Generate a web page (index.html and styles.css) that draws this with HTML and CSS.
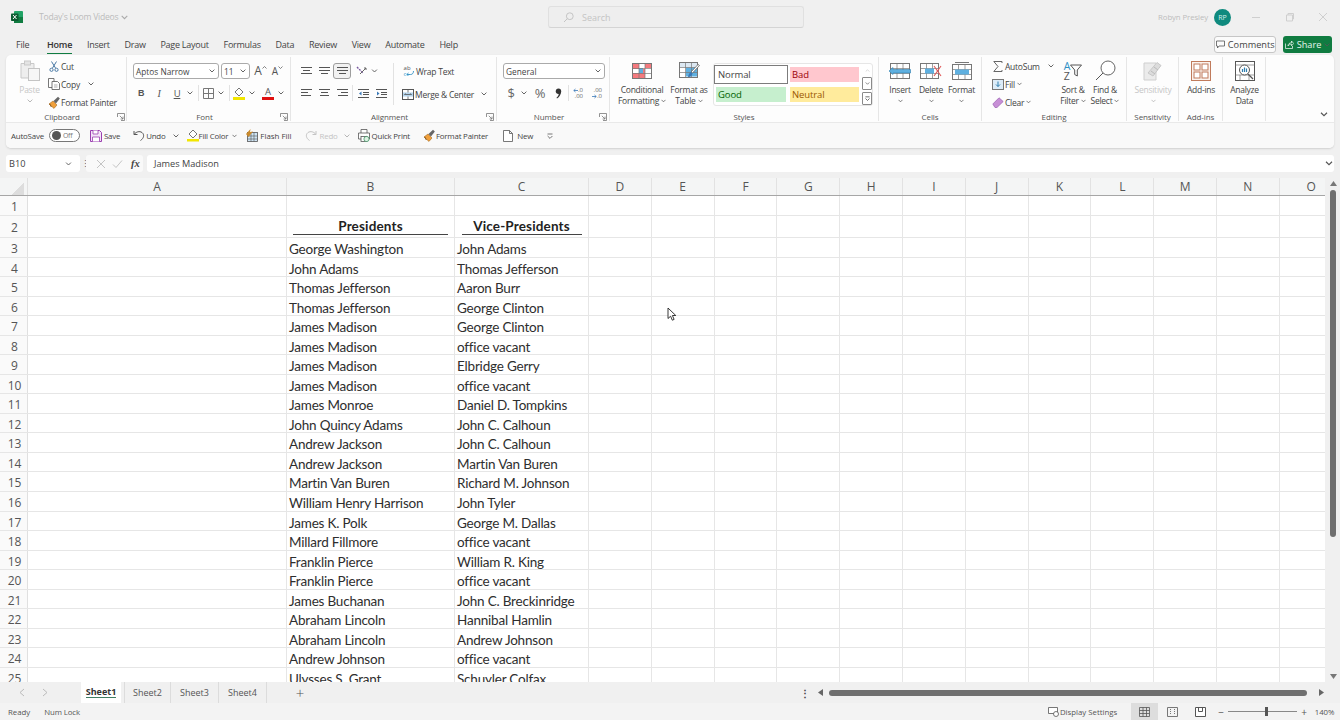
FILE: index.html
```html
<!DOCTYPE html>
<html lang="en">
<head>
<meta charset="utf-8">
<title>Today's Loom Videos - Excel</title>
<link rel="stylesheet" href="styles.css">
</head>
<body>
<svg class="sprite" width="0" height="0">
  <symbol id="chev" viewBox="0 0 6 4"><path d="M.6.6 3 3 5.4.6" fill="none" stroke="#555" stroke-width=".9"/></symbol>
  <symbol id="launch" viewBox="0 0 8 8"><path d="M.5 4V.5H7.5V7.5H4M2.8 2.8 6 6M6 3.6V6H3.6" fill="none" stroke="#777" stroke-width=".8"/></symbol>
  <symbol id="brush" viewBox="0 0 13 13"><path d="M1 8 5 5l4 4-3 3.400z" fill="#f0a03c" stroke="#a66a1f" stroke-width=".6"/><path d="M5.500 5 10 .8l1.800 1.800L8 7.500z" fill="#666"/><path d="M1 8l2 1-1 1 2 .5" fill="none" stroke="#7b4d16" stroke-width=".6"/></symbol>
</svg>

<header class="titlebar">
  <div class="title-left">
    <svg class="xl" width="12" height="12" viewBox="0 0 12 12"><rect x="3" width="9" height="12" rx="1" fill="#21a366"/><rect x="3" y="6" width="9" height="6" fill="#107c41"/><rect y="2.500" width="7.500" height="7.500" rx=".8" fill="#0b5c31"/><path d="M2 4l3.500 4M5.500 4 2 8" stroke="#fff" stroke-width="1"/></svg>
    <span class="doc">Today's Loom Videos</span>
    <svg class="chev faint" width="7" height="5"><use href="#chev"/></svg>
  </div>
  <div class="search">
    <svg width="11" height="11" viewBox="0 0 11 11"><circle cx="6.800" cy="4.200" r="3.400" fill="none" stroke="#c4c4c4"/><path d="M4.300 6.700 1 10" stroke="#c4c4c4"/></svg>
    <span>Search</span>
  </div>
  <div class="title-right">
    <span class="user">Robyn Presley</span>
    <span class="avatar">RP</span>
    <svg class="win win-min" width="10" height="10"><path d="M1 5.500h8" stroke="#cfcfcf"/></svg>
    <svg class="win win-max" width="10" height="10"><path d="M1.500 3h6v6h-6zM3 3V1.500h5.500V7H7.500" fill="none" stroke="#cfcfcf"/></svg>
    <svg class="win win-close" width="10" height="10"><path d="M1 1l8 8M9 1l-8 8" stroke="#cfcfcf"/></svg>
  </div>
</header>

<nav class="tabs">
  <span class="tab t-file">File</span>
  <span class="tab active">Home</span>
  <span class="tab">Insert</span>
  <span class="tab">Draw</span>
  <span class="tab">Page Layout</span>
  <span class="tab">Formulas</span>
  <span class="tab">Data</span>
  <span class="tab">Review</span>
  <span class="tab">View</span>
  <span class="tab">Automate</span>
  <span class="tab">Help</span>
  <button class="btn-comments">
    <svg width="9" height="9" viewBox="0 0 9 9"><path d="M.5 1h8v5H3L1.500 8V6h-1z" fill="none" stroke="#555" stroke-width=".8"/></svg>Comments
  </button>
  <button class="btn-share">
    <svg width="9" height="9" viewBox="0 0 9 9"><path d="M.5 3.500v5h7V6M3 6c0-2 1.500-3.200 3.500-3.200V1L8.700 3.500 6.500 5.800V4.200C5 4.200 3.800 4.800 3 6z" fill="none" stroke="#fff" stroke-width=".7"/></svg>Share
    <svg width="6" height="4"><use href="#chev" class="white"/></svg>
  </button>
</nav>

<section class="card">
  <div class="ribbon">

    <div class="group g-clip">
      <div class="gbody">
        <div class="big big-paste disabled">
          <span class="bigicon">
            <svg width="20" height="21" viewBox="0 0 20 21"><path d="M1 3.500h13V18H1z" fill="#eee" stroke="#c9c9c9"/><rect x="4.500" y="1" width="6" height="4" fill="#e4e4e4" stroke="#c9c9c9"/><rect x="8.500" y="8.500" width="11" height="12" fill="#f6f6f6" stroke="#c4c4c4"/></svg>
          </span>
          <span>Paste</span>
          <svg class="chev faint" width="6" height="4"><use href="#chev"/></svg>
        </div>
        <div class="stack s-clip">
          <div class="sm"><span class="smi">
            <svg width="10" height="11" viewBox="0 0 10 11"><path d="M2.500.5 6.500 7M7.500.5l-4 6.500" stroke="#4b7aa5" fill="none"/><circle cx="2.500" cy="8.800" r="1.600" fill="none" stroke="#4b7aa5"/><circle cx="7.500" cy="8.800" r="1.600" fill="none" stroke="#4b7aa5"/></svg>
          </span>Cut</div>
          <div class="sm"><span class="smi">
            <svg width="12" height="12" viewBox="0 0 12 12"><path d="M.5.500h5.500v9H.5z" fill="#fff" stroke="#555" stroke-width=".8"/><path d="M4 3.500h5.500l2 2v6H4z" fill="#fff" stroke="#555" stroke-width=".8"/><path d="M6 7h3.500M6 9h3.500" stroke="#777" stroke-width=".6"/></svg>
          </span>Copy<svg class="chev c-copy" width="6" height="4"><use href="#chev"/></svg></div>
          <div class="sm"><span class="smi"><svg width="13" height="13"><use href="#brush"/></svg></span>Format Painter</div>
        </div>
      </div>
      <div class="glabel">Clipboard<svg class="launch" width="8" height="8"><use href="#launch"/></svg></div>
    </div>

    <div class="group g-font">
      <div class="gbody col">
        <div class="r r1">
          <div class="select s-fontname"><span>Aptos Narrow</span><svg width="6" height="4"><use href="#chev"/></svg></div>
          <div class="select s-fontsize"><span>11</span><svg width="6" height="4"><use href="#chev"/></svg></div>
          <span class="ic w17 gl-a">A<svg class="caret" width="5" height="3" viewBox="0 0 5 3"><path d="M.5 2.500 2.500.5l2 2" fill="none" stroke="#666" stroke-width=".8"/></svg></span>
          <span class="ic w17 gl-a small">A<svg class="caret" width="5" height="3" viewBox="0 0 5 3"><path d="M.5.500l2 2 2-2" fill="none" stroke="#666" stroke-width=".8"/></svg></span>
        </div>
        <div class="r r2">
          <span class="ic w16 gl-b">B</span>
          <span class="ic w16 m2 gl-i">I</span>
          <span class="ic w16 m2 gl-u">U</span>
          <svg class="cv" width="10" height="4"><use href="#chev"/></svg>
          <i class="vsep m3"></i>
          <span class="ic w16 m1"><svg width="11" height="11" viewBox="0 0 11 11"><path d="M.5.500h10v10H.5zM5.500.5v10M.5 5.500h10" fill="none" stroke="#777"/></svg></span>
          <svg class="cv" width="10" height="4"><use href="#chev"/></svg>
          <i class="vsep m3"></i>
          <span class="ic w16 m1"><svg width="12" height="13" viewBox="0 0 12 13"><path d="M6 1 10 5 6 9 2 5z" fill="#fff" stroke="#666" stroke-width=".9"/><rect y="10" width="12" height="3" fill="#f2e600"/></svg></span>
          <svg class="cv" width="10" height="4"><use href="#chev"/></svg>
          <span class="ic w16 m3 col-a"><span class="col-a-t">A</span><i class="bar-red"></i></span>
          <svg class="cv" width="10" height="4"><use href="#chev"/></svg>
        </div>
      </div>
      <div class="glabel">Font<svg class="launch" width="8" height="8"><use href="#launch"/></svg></div>
    </div>

    <div class="group g-align">
      <div class="gbody">
        <div class="col a-left">
          <div class="r r1">
            <span class="ic w18"><svg width="11" height="12"><path d="M0 2.500h11M2 5.500h7M0 8.500h11" stroke="#555"/></svg></span>
            <span class="ic w18"><svg width="11" height="8"><path d="M0 .5h11M0 3.500h11M2 6.500h7" stroke="#555"/></svg></span>
            <span class="ic w18 on"><svg width="11" height="8"><path d="M0 .5h11M0 3.500h11M2 6.500h7" stroke="#555"/></svg></span>
            <span class="ic w18 m2"><svg width="12" height="10" viewBox="0 0 12 10"><path d="M1 1l6 6" stroke="#7a5aa0" stroke-width="1.400" stroke-dasharray="2 1"/><path d="M4 8 10 2M8 2h2v2" stroke="#666" fill="none"/></svg></span>
            <svg class="cv w7" width="7" height="4"><use href="#chev"/></svg>
          </div>
          <div class="r r2">
            <span class="ic w18"><svg width="11" height="8"><path d="M0 .5h11M0 3.500h7M0 6.500h10" stroke="#555"/></svg></span>
            <span class="ic w18"><svg width="11" height="8"><path d="M0 .5h11M2 3.500h7M1 6.500h9" stroke="#555"/></svg></span>
            <span class="ic w18"><svg width="11" height="8"><path d="M0 .5h11M4 3.500h7M1 6.500h10" stroke="#555"/></svg></span>
            <i class="vsep m1"></i>
            <span class="ic w18 m1"><svg width="11" height="9"><path d="M0 .5h11M5 3.500h6M5 5.500h6M0 8.500h11" stroke="#555"/><path d="M3.500 2.500 1 4.500l2.500 2z" fill="#3b79b8"/></svg></span>
            <span class="ic w18"><svg width="11" height="9"><path d="M0 .5h11M5 3.500h6M5 5.500h6M0 8.500h11" stroke="#555"/><path d="M1 2.500l2.500 2-2.500 2z" fill="#3b79b8"/></svg></span>
          </div>
        </div>
        <i class="vsep tall"></i>
        <div class="col a-right">
          <div class="sm sm-wrap"><span class="smi w14"><span class="wi"><span class="wi-ab">ab</span><span class="wi-c">c<svg width="8" height="5" viewBox="0 0 8 5"><path d="M7.500 0c0 2-1 3.500-3 3.500H.8M2.500 2 .8 3.500l1.700 1.300" fill="none" stroke="#2f8fc4" stroke-width=".9"/></svg></span></span></span>Wrap Text</div>
          <div class="sm sm-merge"><span class="smi w14"><svg width="12" height="11" viewBox="0 0 12 11"><rect x=".5" y=".5" width="11" height="10" fill="#fff" stroke="#555"/><rect x="1" y="3.500" width="10" height="4" fill="#b4d4ec"/><path d="M6 .5v3M6 7.500v3M2.500 5.500h7M2.500 5.500l1-1M9.500 5.500l-1-1" stroke="#555" stroke-width=".8" fill="none"/></svg></span>Merge &amp; Center<svg class="chev c-merge" width="6" height="4"><use href="#chev"/></svg></div>
        </div>
      </div>
      <div class="glabel">Alignment<svg class="launch" width="8" height="8"><use href="#launch"/></svg></div>
    </div>

    <div class="group g-num">
      <div class="gbody col">
        <div class="r r1"><div class="select s-general"><span>General</span><svg width="6" height="4"><use href="#chev"/></svg></div></div>
        <div class="r r2">
          <span class="ic w16 gl-big">$</span>
          <svg class="cv" width="10" height="4"><use href="#chev"/></svg>
          <span class="ic w16 m3 gl-big">%</span>
          <span class="ic w16 m2"><svg width="7" height="11" viewBox="0 0 7 11"><circle cx="3.500" cy="3.200" r="2.700" fill="#333"/><path d="M6 3.500C6 6.500 4.500 9 2 10.500L1.500 9.800C3 8.500 3.800 7 3.800 5.500z" fill="#333"/></svg></span>
          <i class="vsep m2"></i>
          <span class="ic w16 m1"><span class="deci"><span class="d-top"><svg width="5" height="5" viewBox="0 0 5 5"><path d="M5 2.500H.8M2.500 1 .8 2.500 2.500 4" fill="none" stroke="#3b79b8" stroke-width=".8"/></svg>.0</span><span class="d-bot">.00</span></span></span>
          <span class="ic w16 m3"><span class="deci"><span class="d-bot">.00</span><span class="d-top"><svg width="5" height="5" viewBox="0 0 5 5"><path d="M0 2.500h4.200M2.500 1l1.700 1.500L2.500 4" fill="none" stroke="#3b79b8" stroke-width=".8"/></svg>.0</span></span></span>
        </div>
      </div>
      <div class="glabel">Number<svg class="launch" width="8" height="8"><use href="#launch"/></svg></div>
    </div>

    <div class="group g-styles">
      <div class="gbody">
        <div class="big w48">
          <span class="bigicon"><svg width="20" height="16" viewBox="0 0 20 16"><rect x=".5" y=".5" width="19" height="15" fill="#fff" stroke="#777"/><path d="M1 1h6v5H1zM7 6h6v4H7zM1 10h12v5H1zM13 1h6v4h-6z" fill="#f47a7e"/><path d="M7 5h4v5H7z" fill="#5fb0e0"/><path d="M7 .5v15M13 .5v15M.5 5.500h19M.5 10.500h19" stroke="#777" stroke-width=".7"/></svg></span>
          <span>Conditional</span>
          <span>Formatting <svg width="5" height="4"><use href="#chev"/></svg></span>
        </div>
        <div class="big w46">
          <span class="bigicon"><svg width="21" height="17" viewBox="0 0 21 17"><rect x=".5" y=".5" width="18" height="15" fill="#fff" stroke="#777"/><path d="M7 5.500h11v9H7z" fill="#5fb0e0"/><path d="M1 1h17v4H1z" fill="#dce8f2"/><path d="M6.500.5v15M12.500.5v15M.5 5.500h18M.5 10.500h18" stroke="#777" stroke-width=".7"/><path d="M20.500 3.500 13.500 11l-1.500-1 7-7.500z" fill="#fff" stroke="#555" stroke-width=".7"/><path d="M9 15c.5-3 2-5 3-5l1.500 1.200C13.500 13 11.500 15.500 9 15z" fill="#3b79b8"/></svg></span>
          <span>Format as</span>
          <span>Table <svg width="5" height="4"><use href="#chev"/></svg></span>
        </div>
        <div class="gallery">
          <div class="cells">
            <span class="st st-normal">Normal</span>
            <span class="st st-bad">Bad</span>
            <span class="st st-good">Good</span>
            <span class="st st-neutral">Neutral</span>
          </div>
          <div class="gscroll">
            <span class="gs gs-up"><svg width="5" height="3" viewBox="0 0 6 4"><path d="M.6 3.400 3 1l2.400 2.400" fill="none" stroke="#ccc"/></svg></span>
            <span class="gs gs-down"><svg width="5" height="3"><use href="#chev"/></svg></span>
            <span class="gs gs-more"><svg width="5" height="5" viewBox="0 0 6 6"><path d="M.5 1h5M.6 3 3 5.400 5.400 3" fill="none" stroke="#555"/></svg></span>
          </div>
        </div>
      </div>
      <div class="glabel">Styles</div>
    </div>

    <div class="group g-cells">
      <div class="gbody">
        <div class="big w30">
          <span class="bigicon"><svg width="22" height="16" viewBox="0 0 22 16"><rect x="1.500" y=".5" width="19" height="15" fill="#fff" stroke="#777"/><path d="M8 .5v15M14 .5v15M1.500 5.500h19M1.500 10.500h19" stroke="#777" stroke-width=".7"/><path d="M0 8 4 4.500V6.500H21.500V10H4v1.500z" fill="#5fb0e0" stroke="#2f7fb0" stroke-width=".6"/></svg></span>
          <span>Insert</span>
          <svg class="chev" width="5" height="4"><use href="#chev"/></svg>
        </div>
        <div class="big w32">
          <span class="bigicon"><svg width="22" height="16" viewBox="0 0 22 16"><rect x=".5" y=".5" width="18" height="15" fill="#fff" stroke="#777"/><path d="M6.500.5v15M12.500.5v15M.5 5.500h18M.5 10.500h18" stroke="#777" stroke-width=".7"/><rect x="5" y="5.500" width="9" height="5" fill="#5fb0e0"/><path d="M14 3l7 10M21 3l-7 10" stroke="#e25a5a" stroke-width="1.100"/></svg></span>
          <span>Delete</span>
          <svg class="chev" width="5" height="4"><use href="#chev"/></svg>
        </div>
        <div class="big w29">
          <span class="bigicon"><svg width="20" height="18" viewBox="0 0 20 18"><path d="M3 .5h14" stroke="#777"/><rect x=".5" y="2.500" width="19" height="15" fill="#fff" stroke="#777"/><path d="M6.500 2.500v15M13 2.500v15M.5 7.500h19M.5 12.500h19" stroke="#777" stroke-width=".7"/><rect x="3" y="7.500" width="14" height="5" fill="#5fb0e0"/></svg></span>
          <span>Format</span>
          <svg class="chev" width="5" height="4"><use href="#chev"/></svg>
        </div>
      </div>
      <div class="glabel">Cells</div>
    </div>

    <div class="group g-edit">
      <div class="gbody">
        <div class="stack s-edit">
          <div class="sm"><span class="smi w15"><svg width="10" height="11" viewBox="0 0 10 11"><path d="M9 2V.5H.8L5 5.500.8 10.500H9V9" fill="none" stroke="#666"/></svg></span>AutoSum<svg class="chev c-sum" width="6" height="4"><use href="#chev"/></svg></div>
          <div class="sm"><span class="smi w15"><svg width="12" height="11" viewBox="0 0 12 11"><rect x=".5" y=".5" width="11" height="10" fill="#dcecf8" stroke="#777"/><path d="M6 2.500v5M4 5.500l2 2 2-2" fill="none" stroke="#2f7fb0"/></svg></span>Fill <svg class="chev c-in" width="5" height="4"><use href="#chev"/></svg></div>
          <div class="sm"><span class="smi w15"><svg width="12" height="11" viewBox="0 0 12 11"><path d="M.8 7 7 .8l4.200 3.700L5 10.500H3z" fill="#c78fd6" stroke="#9a5fb0" stroke-width=".7"/></svg></span>Clear <svg class="chev c-in" width="5" height="4"><use href="#chev"/></svg></div>
        </div>
        <div class="big w34">
          <span class="bigicon sorti"><span class="az"><span class="az-a">A</span><span class="az-z">Z</span></span><svg width="12" height="13" viewBox="0 0 12 13"><path d="M.5 1h11L7.300 6v6L4.700 10.500V6z" fill="none" stroke="#555"/></svg></span>
          <span>Sort &amp;</span>
          <span>Filter <svg width="5" height="4"><use href="#chev"/></svg></span>
        </div>
        <div class="big w30">
          <span class="bigicon"><svg width="21" height="21" viewBox="0 0 21 21"><circle cx="13" cy="8" r="7" fill="#fff" stroke="#555" stroke-width=".9"/><path d="M8 13 1 20" stroke="#555"/></svg></span>
          <span>Find &amp;</span>
          <span>Select <svg width="5" height="4"><use href="#chev"/></svg></span>
        </div>
      </div>
      <div class="glabel">Editing</div>
    </div>

    <div class="group g-sens">
      <div class="gbody"><div class="big disabled w52">
        <span class="bigicon"><svg width="20" height="21" viewBox="0 0 20 21"><path d="M1 3h12v17H1z" fill="#ebebeb" stroke="#cfcfcf"/><path d="M5 13 14 2.500l4 3L10 16z" fill="#dcdcdc" stroke="#c8c8c8"/><path d="M8 11l4 3M11 7l4 3" stroke="#bbb"/></svg></span>
        <span>Sensitivity</span>
        <svg class="chev faint" width="5" height="4"><use href="#chev"/></svg>
      </div></div>
      <div class="glabel">Sensitivity</div>
    </div>

    <div class="group g-add">
      <div class="gbody"><div class="big w44">
        <span class="bigicon"><svg width="20" height="20" viewBox="0 0 20 20"><rect x=".5" y=".5" width="19" height="19" fill="#fbf3ee" stroke="#c07b5c"/><rect x="3" y="3" width="6" height="6" fill="#fff" stroke="#c07b5c"/><rect x="11" y="3" width="6" height="6" fill="#fff" stroke="#c07b5c"/><rect x="3" y="11" width="6" height="6" fill="#fff" stroke="#c07b5c"/><rect x="11" y="11" width="6" height="6" fill="#fff" stroke="#c07b5c"/></svg></span>
        <span>Add-ins</span>
      </div></div>
      <div class="glabel">Add-ins</div>
    </div>

    <div class="group g-ana">
      <div class="gbody"><div class="big w43">
        <span class="bigicon"><svg width="20" height="20" viewBox="0 0 20 20"><rect x=".5" y=".5" width="19" height="19" fill="#fff" stroke="#555"/><path d="M.5 4h19M.5 14h19M5 14v5.500M14 14v5.500" stroke="#777" stroke-width=".7"/><circle cx="9.500" cy="9" r="5" fill="#fff" stroke="#555"/><path d="M7.500 8v3M9.500 6.500V11M11.500 7.500V11" stroke="#2f7fb0" stroke-width="1.200"/><path d="M13 13l5 5" stroke="#555" stroke-width="1.200"/></svg></span>
        <span>Analyze</span>
        <span>Data</span>
      </div></div>
    </div>

    <svg class="collapse" width="8" height="5"><use href="#chev"/></svg>
  </div>

  <div class="qat">
    <span class="q q-auto">AutoSave</span>
    <span class="toggle"><i></i>Off</span>
    <span class="q q-save"><svg width="12" height="12" viewBox="0 0 12 12"><path d="M.5.500h9l2 2v9H.5z" fill="#f3e4f7" stroke="#9a3fb0"/><path d="M3 .5v3.500h5V.5M2.500 11.500V7h7v4.500" fill="#fff" stroke="#9a3fb0" stroke-width=".8"/></svg>Save</span>
    <span class="q q-undo"><svg width="12" height="11" viewBox="0 0 12 11"><path d="M1 1v3.500h3.500M1.200 4.300C3 1.800 6.500.8 9 2.500c2.500 2 2.200 5.500-1.500 8" fill="none" stroke="#555"/></svg>Undo</span>
    <svg class="chev c-undo" width="6" height="4"><use href="#chev"/></svg>
    <span class="q q-fill"><svg width="12" height="13" viewBox="0 0 12 13"><path d="M6 1 10 5 6 9 2 5z" fill="#fff" stroke="#666" stroke-width=".9"/><rect y="10" width="12" height="2.500" fill="#f2e600"/></svg>Fill Color<svg class="chev c-q" width="5" height="4"><use href="#chev"/></svg></span>
    <span class="q q-flash"><svg width="13" height="13" viewBox="0 0 13 13"><rect x="2.500" y="3.500" width="10" height="9" fill="#cfe5f5" stroke="#555" stroke-width=".8"/><path d="M6 3.500v9M9 3.500v9M2.500 7h10M2.500 10h10" stroke="#555" stroke-width=".6"/><path d="M1 5 5.500 0 5 3l3-.5L3.500 8z" fill="#c98a2e"/></svg>Flash Fill</span>
    <span class="q q-redo grey"><svg width="12" height="11" viewBox="0 0 12 11"><path d="M11 1v3.500H7.500M10.800 4.300C9 1.800 5.500.8 3 2.500.5 4.500.8 8 4.500 10.500" fill="none" stroke="#c4c4c4"/></svg>Redo</span>
    <svg class="chev faint c-redo" width="6" height="4"><use href="#chev"/></svg>
    <span class="q q-print"><svg width="12" height="13" viewBox="0 0 12 13"><path d="M3 4V.5h6V4M.5 4h11v6H9M3 10H.5V4" fill="#fff" stroke="#555" stroke-width=".8"/><rect x="3" y="7.500" width="6" height="5" fill="#fff" stroke="#555" stroke-width=".8"/><circle cx="8.500" cy="10" r="2.600" fill="#dff2e4" stroke="#2e8b57" stroke-width=".7"/></svg>Quick Print</span>
    <span class="q q-paint"><svg width="13" height="13"><use href="#brush"/></svg>Format Painter</span>
    <span class="q q-new"><svg width="10" height="12" viewBox="0 0 10 12"><path d="M.5.500h6l3 3v8h-9zM6.500.5v3h3" fill="#fff" stroke="#555" stroke-width=".8"/></svg>New</span>
    <svg class="q-over" width="6" height="6" viewBox="0 0 6 6"><path d="M.5 1h5M.6 3 3 5.400 5.400 3" fill="none" stroke="#555" stroke-width=".8"/></svg>
  </div>
</section>

<section class="fbar">
  <div class="namebox"><span>B10</span><svg width="7" height="4"><use href="#chev"/></svg></div>
  <span class="fdots">⋮</span>
  <div class="fbtns">
    <svg width="10" height="10"><path d="M1 1l8 8M9 1l-8 8" stroke="#c4c4c4"/></svg>
    <svg width="11" height="10"><path d="M1 5.500 4 8.500 10 1.500" fill="none" stroke="#c4c4c4"/></svg>
    <span class="fx">fx</span>
  </div>
  <div class="finput"><span>James Madison</span><svg width="8" height="5"><use href="#chev"/></svg></div>
</section>

<main class="book">
  <div class="sheet">
    <div class="colhead">
      <span class="corner"></span>
      <span class="ch ca">A</span><span class="ch cb">B</span><span class="ch cc">C</span>
      <span class="ch">D</span><span class="ch">E</span><span class="ch">F</span><span class="ch">G</span><span class="ch">H</span><span class="ch">I</span><span class="ch">J</span><span class="ch">K</span><span class="ch">L</span><span class="ch">M</span><span class="ch">N</span><span class="ch last">O</span>
    </div>
    <div class="rows">
      <div class="row r-first"><span class="rh">1</span><span class="c ca"></span><span class="c cb"></span><span class="c cc"></span><span class="rest"></span></div>
      <div class="row r-head"><span class="rh">2</span><span class="c ca"></span><span class="c cb hd"><b>Presidents</b></span><span class="c cc hd"><b>Vice-Presidents</b></span><span class="rest"></span></div>
      <div class="row"><span class="rh">3</span><span class="c ca"></span><span class="c cb">George Washington</span><span class="c cc">John Adams</span><span class="rest"></span></div>
      <div class="row"><span class="rh">4</span><span class="c ca"></span><span class="c cb">John Adams</span><span class="c cc">Thomas Jefferson</span><span class="rest"></span></div>
      <div class="row"><span class="rh">5</span><span class="c ca"></span><span class="c cb">Thomas Jefferson</span><span class="c cc">Aaron Burr</span><span class="rest"></span></div>
      <div class="row"><span class="rh">6</span><span class="c ca"></span><span class="c cb">Thomas Jefferson</span><span class="c cc">George Clinton</span><span class="rest"></span></div>
      <div class="row"><span class="rh">7</span><span class="c ca"></span><span class="c cb">James Madison</span><span class="c cc">George Clinton</span><span class="rest"></span></div>
      <div class="row"><span class="rh">8</span><span class="c ca"></span><span class="c cb">James Madison</span><span class="c cc">office vacant</span><span class="rest"></span></div>
      <div class="row"><span class="rh">9</span><span class="c ca"></span><span class="c cb">James Madison</span><span class="c cc">Elbridge Gerry</span><span class="rest"></span></div>
      <div class="row"><span class="rh">10</span><span class="c ca"></span><span class="c cb">James Madison</span><span class="c cc">office vacant</span><span class="rest"></span></div>
      <div class="row"><span class="rh">11</span><span class="c ca"></span><span class="c cb">James Monroe</span><span class="c cc">Daniel D. Tompkins</span><span class="rest"></span></div>
      <div class="row"><span class="rh">12</span><span class="c ca"></span><span class="c cb">John Quincy Adams</span><span class="c cc">John C. Calhoun</span><span class="rest"></span></div>
      <div class="row"><span class="rh">13</span><span class="c ca"></span><span class="c cb">Andrew Jackson</span><span class="c cc">John C. Calhoun</span><span class="rest"></span></div>
      <div class="row"><span class="rh">14</span><span class="c ca"></span><span class="c cb">Andrew Jackson</span><span class="c cc">Martin Van Buren</span><span class="rest"></span></div>
      <div class="row"><span class="rh">15</span><span class="c ca"></span><span class="c cb">Martin Van Buren</span><span class="c cc">Richard M. Johnson</span><span class="rest"></span></div>
      <div class="row"><span class="rh">16</span><span class="c ca"></span><span class="c cb">William Henry Harrison</span><span class="c cc">John Tyler</span><span class="rest"></span></div>
      <div class="row"><span class="rh">17</span><span class="c ca"></span><span class="c cb">James K. Polk</span><span class="c cc">George M. Dallas</span><span class="rest"></span></div>
      <div class="row"><span class="rh">18</span><span class="c ca"></span><span class="c cb">Millard Fillmore</span><span class="c cc">office vacant</span><span class="rest"></span></div>
      <div class="row"><span class="rh">19</span><span class="c ca"></span><span class="c cb">Franklin Pierce</span><span class="c cc">William R. King</span><span class="rest"></span></div>
      <div class="row"><span class="rh">20</span><span class="c ca"></span><span class="c cb">Franklin Pierce</span><span class="c cc">office vacant</span><span class="rest"></span></div>
      <div class="row"><span class="rh">21</span><span class="c ca"></span><span class="c cb">James Buchanan</span><span class="c cc">John C. Breckinridge</span><span class="rest"></span></div>
      <div class="row"><span class="rh">22</span><span class="c ca"></span><span class="c cb">Abraham Lincoln</span><span class="c cc">Hannibal Hamlin</span><span class="rest"></span></div>
      <div class="row"><span class="rh">23</span><span class="c ca"></span><span class="c cb">Abraham Lincoln</span><span class="c cc">Andrew Johnson</span><span class="rest"></span></div>
      <div class="row"><span class="rh">24</span><span class="c ca"></span><span class="c cb">Andrew Johnson</span><span class="c cc">office vacant</span><span class="rest"></span></div>
      <div class="row"><span class="rh">25</span><span class="c ca"></span><span class="c cb">Ulysses S. Grant</span><span class="c cc">Schuyler Colfax</span><span class="rest"></span></div>
    </div>
    <svg class="cursor" width="10" height="14" viewBox="0 0 10 14"><path d="M1 1v10.500l2.600-2.300 1.700 4 1.800-.8-1.700-3.900h3.400z" fill="#fff" stroke="#222" stroke-width=".9"/></svg>
  </div>
  <div class="vscroll">
    <svg width="7" height="5"><path d="M3.500 0 7 5H0z" fill="#777"/></svg>
    <span class="vthumb"></span>
    <svg class="vdown" width="7" height="5"><path d="M3.500 5 7 0H0z" fill="#777"/></svg>
  </div>
</main>

<section class="sheetbar">
  <div class="nav">
    <svg width="6" height="9"><path d="M5 1 1 4.500 5 8" fill="none" stroke="#bbb"/></svg>
    <svg width="6" height="9"><path d="M1 1l4 3.500L1 8" fill="none" stroke="#bbb"/></svg>
  </div>
  <span class="stab on">Sheet1</span>
  <span class="stab s2">Sheet2</span>
  <span class="stab">Sheet3</span>
  <span class="stab">Sheet4</span>
  <span class="addsheet">+</span>
  <span class="hdots">⋮</span>
  <svg class="harr" width="5" height="7"><path d="M5 0v7L0 3.500z" fill="#666"/></svg>
  <span class="hthumb"></span>
  <svg class="harr r" width="5" height="7"><path d="M0 0v7l5-3.500z" fill="#666"/></svg>
</section>

<footer class="status">
  <span class="st-ready">Ready</span>
  <span class="st-num">Num Lock</span>
  <span class="st-disp"><svg width="11" height="10" viewBox="0 0 11 10"><path d="M.5.500h9v6h-9z" fill="#fff" stroke="#555" stroke-width=".8"/><circle cx="8" cy="7" r="2.500" fill="#fff" stroke="#555" stroke-width=".8"/></svg>Display Settings</span>
  <span class="view on"><svg width="11" height="10"><path d="M.5.500h10v9H.5zM4 .5v9M7.500.5v9M.5 3.500h10M.5 6.500h10" fill="none" stroke="#555" stroke-width=".8"/></svg></span>
  <span class="view"><svg width="11" height="10"><path d="M.5.500h10v9H.5z" fill="#f3f3f3" stroke="#777"/><path d="M3.500 2v6M7.500 2v6" stroke="#777" stroke-dasharray="1 1"/></svg></span>
  <span class="view"><svg width="11" height="10"><path d="M.5.500h10v9H.5z" fill="#fff" stroke="#555"/><path d="M3.500.5v4h4v-4" fill="none" stroke="#555"/></svg></span>
  <span class="zm z-minus">−</span>
  <span class="slider"><i></i></span>
  <span class="zm z-plus">+</span>
  <span class="pct">140%</span>
</footer>
</body>
</html>
```

FILE: styles.css
```css
* { box-sizing: border-box; }
html, body { margin: 0; padding: 0; }
body {
  width: 1340px;
  height: 720px;
  overflow: hidden;
  display: flex;
  flex-direction: column;
  position: relative;
  background: #f0f0f0;
  color: #444;
  font-family: "Open Sans", "Noto Sans", sans-serif;
  font-size: 8.5px;
}
.sprite { position: absolute; }
svg { display: block; flex: none; }
.white path { stroke: #fff; }
.faint { opacity: .45; }
.grey { color: #c4c4c4; }

/* title bar */
.titlebar {
  height: 34px;
  flex: none;
  display: grid;
  grid-template-columns: 548px 256px 1fr;
  align-items: center;
}
.title-left { display: flex; align-items: center; padding-left: 11px; }
.xl { margin-top: -1px; }
.doc { margin-left: 16px; color: #bcbcbc; font-size: 8.6px; letter-spacing: -.25px; }
.title-left .chev { margin-left: 3px; }
.search {
  height: 22px;
  background: #eeeeee;
  border: 1px solid #e0e0e0;
  border-bottom-color: #d4d4d4;
  border-radius: 3px;
  display: flex;
  align-items: center;
  padding-left: 14px;
  gap: 8px;
  color: #c4c4c4;
  font-size: 9px;
}
.title-right { display: flex; align-items: center; justify-content: flex-end; padding-right: 12px; }
.user { color: #bdbdbd; font-size: 7.800px; letter-spacing: -.1px; }
.avatar {
  width: 17px; height: 17px;
  margin-left: 6px;
  border-radius: 50%;
  background: #0f8a7e;
  color: #d8f0ec;
  font-size: 7px;
  display: flex; align-items: center; justify-content: center;
}
.win-min { margin-left: 20px; }
.win-max { margin-left: 24px; }
.win-close { margin-left: 23px; }

/* tabs */
.tabs {
  height: 21px;
  flex: none;
  display: flex;
  align-items: center;
  padding-left: 16px;
  gap: 14.800px;
  font-size: 9px;
  letter-spacing: -.25px;
  color: #444;
}
.tab { position: relative; line-height: 21px; }
.t-file { margin-right: 3px; }
.active { color: #333; font-weight: 600; }
.active::after {
  content: "";
  position: absolute;
  left: 0; right: 0; bottom: 1px;
  height: 1.500px;
  background: #107c41;
}
.btn-comments, .btn-share {
  font: inherit;
  letter-spacing: 0;
  font-size: 9.200px;
  height: 17px;
  display: flex;
  align-items: center;
  border-radius: 3px;
  padding: 0;
}
.btn-comments {
  margin-left: auto;
  width: 62px;
  background: #fbfbfb;
  border: 1px solid #c6c6c6;
  color: #444;
  gap: 3px;
  justify-content: center;
}
.btn-share {
  width: 49px;
  margin: 0 8px 0 -8px;
  background: #107c41;
  border: 0;
  color: #e6f4ec;
  gap: 3px;
  justify-content: center;
}

/* ribbon card */
.card {
  flex: none;
  margin: 0 6px;
  background: #fdfdfd;
  border-radius: 5px;
  box-shadow: 0 1px 2px #d0d0d0;
}
.ribbon {
  height: 68px;
  display: flex;
  padding-top: 2px;
  position: relative;
  border-bottom: 1px solid #e9e9e9;
  letter-spacing: -.25px;
}
.group {
  height: 64px;
  flex: none;
  display: flex;
  flex-direction: column;
  border-right: 1px solid #e6e6e6;
}
.gbody { height: 54px; display: flex; flex: none; }
.col { display: flex; flex-direction: column; }
.glabel {
  height: 10px;
  line-height: 12px;
  text-align: center;
  position: relative;
  font-size: 8px;
  letter-spacing: -.1px;
  color: #555;
}
.launch { position: absolute; right: 1px; top: 2px; }
.g-clip { width: 121px; }
.g-font { width: 164px; }
.g-align { width: 206px; }
.g-num { width: 113px; }
.g-styles { width: 269px; }
.g-cells { width: 103px; }
.g-edit { width: 145px; }
.g-sens { width: 52px; }
.g-add { width: 44px; }
.g-ana { width: 43px; }
.g-clip .glabel, .g-font .glabel, .g-align .glabel, .g-num .glabel { padding-right: 8px; }
.g-font .launch, .g-align .launch, .g-num .launch { right: 2px; }

.big {
  display: flex;
  flex-direction: column;
  align-items: center;
  line-height: 11px;
  flex: none;
  font-size: 8.500px;
  white-space: nowrap;
}
.big > span:not(.bigicon) { display: flex; align-items: center; gap: 2px; height: 11px; }
.big > .chev { margin-top: 3.500px; }
.bigicon { height: 27px; display: flex; align-items: center; justify-content: center; }
.disabled { color: #c6c6c6; }
.big-paste { width: 47px; }
.w29 { width: 29px; } .w30 { width: 30px; } .w32 { width: 32px; } .w34 { width: 34px; }
.w43 { width: 43px; } .w44 { width: 44px; } .w46 { width: 46px; } .w48 { width: 48px; } .w52 { width: 52px; }

.stack { display: flex; flex-direction: column; }
.sm { height: 18px; display: flex; align-items: center; white-space: nowrap; font-size: 8.500px; }
.smi { width: 14px; display: flex; align-items: center; justify-content: center; flex: none; }
.smi.w14 { width: 14px; } .smi.w15 { width: 15px; }
.s-clip .smi { margin-left: -6px; }
.c-copy { margin-left: 8px; }
.c-merge { margin-left: 7px; }
.c-sum { margin-left: 8px; }
.c-in { margin-left: 2px; }
.s-edit { width: 66px; margin-left: 8px; }

.r { display: flex; align-items: center; flex: none; }
.r1 { height: 16px; margin-top: 6px; }
.r2 { height: 16px; margin-top: 6px; }
.g-font .gbody, .g-num .gbody { padding-left: 6px; }
.select {
  height: 16px;
  background: #fff;
  border: 1px solid #aaa;
  border-radius: 3px;
  display: flex;
  align-items: center;
  justify-content: space-between;
  padding: 0 3px 0 2px;
  color: #444;
  font-size: 8.300px;
  letter-spacing: 0;
}
.s-fontname { width: 86px; }
.s-fontsize { width: 29px; margin: 0 2px; }
.s-general { width: 102px; }
.ic { display: flex; align-items: center; justify-content: center; height: 16px; flex: none; color: #555; }
.w16 { width: 16px; } .w17 { width: 17px; } .w18 { width: 18px; }
.m1 { margin-left: 1px; } .m2 { margin-left: 2px; } .m3 { margin-left: 3px; }
.cv { flex: none; }
.vsep { width: 1px; height: 16px; background: #e2e2e2; flex: none; display: block; }
.on.ic { border: 1px solid #9d9d9d; border-radius: 3px; background: #f2f2f2; }
.gl-a { font-size: 12px; line-height: 14px; align-items: center; color: #555; gap: 0; letter-spacing: 0; }
.gl-a.small { font-size: 10px; }
.caret { align-self: flex-start; margin-top: 3px; }
.gl-b { font-weight: 700; font-size: 9px; font-family: "Liberation Sans", sans-serif; }
.gl-i { font-style: italic; font-size: 10px; font-family: "Liberation Serif", serif; }
.gl-u { text-decoration: underline; font-size: 9.500px; }
.gl-big { font-size: 13px; color: #666; }
.col-a { flex-direction: column; gap: 0; }
.col-a-t { font-size: 9.500px; line-height: 10px; }
.bar-red { display: block; width: 12px; height: 3px; background: #e01010; }

.g-align .gbody { padding-left: 6px; }
.a-left { width: 96px; }
.vsep.tall { height: 42px; margin-top: 6px; }
.a-right { padding-left: 8px; }
.sm-wrap { margin-top: 5px; }
.sm-merge { margin-top: 5px; margin-left: -1px; }
.wi { display: flex; flex-direction: column; font-size: 6px; line-height: 6px; letter-spacing: 0; color: #555; }
.wi-ab { display: block; }
.wi-c { display: flex; color: #2f8fc4; }

.deci { display: flex; flex-direction: column; align-items: flex-end; font-size: 6px; line-height: 6px; letter-spacing: 0; color: #666; }
.d-top { display: flex; align-items: center; }

.sorti { gap: 0; }
.az { display: flex; flex-direction: column; font-size: 10.500px; line-height: 10px; letter-spacing: 0; }
.az-a { color: #2f8fc4; }
.az-z { color: #555; }

.g-styles .gbody { padding-left: 8px; }
.gallery {
  width: 160px;
  height: 43px;
  margin: 6px 0 0 1px;
  border: 1px solid #e6e6e6;
  border-radius: 3px;
  background: #fff;
  display: flex;
  flex: none;
}
.cells { display: grid; grid-template-columns: 74px 74px; grid-template-rows: 20px 20px; width: 148px; }
.st { display: flex; align-items: center; margin: 3px 2px 2px; padding: 0 0 1px 2px; font-size: 9.500px; letter-spacing: -.1px; }
.st-normal { margin: 1px 0 0; padding: 0 0 1px 3px; border: 1.500px solid #7c7c7c; color: #444; background: #fff; }
.st-bad { background: #ffc7ce; color: #9c0006; margin-right: 3px; }
.st-good { background: #c6efce; color: #006100; }
.st-neutral { background: #ffeb9c; color: #9c5700; margin-right: 3px; }
.gscroll { width: 10px; display: flex; flex-direction: column; }
.gs { display: flex; align-items: center; justify-content: center; }
.gs-up { height: 13px; }
.gs-down { height: 13px; border: 1px solid #8a8a8a; border-radius: 1px; background: #fff; }
.gs-more { height: 13px; border: 1px solid #8a8a8a; border-radius: 1px; background: #fff; margin-top: 2px; }

.g-cells .gbody { padding-left: 6px; }
.collapse { position: absolute; right: 6px; top: 57px; }

/* quick access */
.qat {
  height: 25px;
  display: flex;
  align-items: center;
  padding-left: 5px;
  background: #f9f9f9;
  border-radius: 0 0 5px 5px;
  font-size: 7.900px;
  letter-spacing: -.2px;
  color: #444;
}
.q { display: flex; align-items: center; white-space: nowrap; flex: none; }
.toggle {
  width: 31px; height: 13px;
  margin-left: 5px;
  border: 1px solid #777;
  border-radius: 7px;
  display: flex; align-items: center;
  padding-left: 2px;
  gap: 2px;
  font-size: 7px;
  color: #777;
  background: #fff;
}
.toggle i { width: 9px; height: 9px; border-radius: 50%; background: #555; display: block; }
.q-save { margin-left: 10px; gap: 2px; }
.q-undo { margin-left: 13px; gap: 1px; }
.c-undo { margin-left: 7px; }
.q-fill { margin-left: 8px; gap: 0; }
.c-q { margin-left: 4px; }
.q-flash { margin-left: 8px; gap: 2px; letter-spacing: 0; }
.q-redo { margin-left: 14px; gap: 2px; }
.c-redo { margin-left: 6px; }
.q-print { margin-left: 8px; gap: 2px; }
.q-paint { margin-left: 13px; gap: 0; }
.q-new { margin-left: 15px; gap: 4px; }
.q-over { margin-left: 14px; }

/* formula bar */
.fbar {
  height: 17px;
  flex: none;
  margin: 7px 6px 6px;
  display: flex;
  align-items: stretch;
  font-size: 9.200px;
}
.namebox {
  width: 74px;
  background: #fff;
  border-radius: 3px;
  display: flex; align-items: center; justify-content: space-between;
  padding: 0 8px 0 3px;
}
.fdots { width: 5px; margin: 0 0 0 1px; text-align: center; line-height: 17px; font-size: 9px; color: #666; }
.fbtns {
  width: 57px;
  background: #f9f9f9;
  border-radius: 3px;
  display: flex; align-items: center;
  gap: 6px;
  padding-left: 10px;
}
.fx { font: italic 700 10.500px "Liberation Serif", serif; color: #444; margin-left: 2px; }
.finput {
  flex: 1;
  margin-left: 4px;
  background: #fff;
  border-radius: 3px;
  display: flex; align-items: center; justify-content: space-between;
  padding: 0 1px 0 7px;
}

/* worksheet */
.book { height: 504px; flex: none; display: flex; }
.sheet { width: 1325px; display: flex; flex-direction: column; overflow: hidden; }
.colhead {
  height: 18px;
  flex: none;
  display: flex;
  background: #f4f5f5;
  border-bottom: 1px solid #a6a6a6;
  color: #555;
  font-size: 12px;
}
.corner {
  width: 28px;
  flex: none;
  border-right: 1px solid #e0e0e0;
  background: linear-gradient(135deg, transparent 50%, #dddddd 50%) no-repeat 11px 5px / 13px 12px;
}
.ch {
  width: 62.800px;
  flex: none;
  text-align: center;
  line-height: 17px;
  border-right: 1px solid #e2e2e2;
}
.ch.ca, .c.ca { width: 259px; }
.ch.cb, .c.cb { width: 168px; }
.ch.cc, .c.cc { width: 134px; }
.ch.last { border-right: 0; }
.rows { flex: 1; overflow: hidden; background: #fff; }
.row {
  height: 19.520px;
  display: flex;
  border-bottom: 1px solid #e6e6e6;
  font-family: "Lato", sans-serif;
  font-size: 13.500px;
  letter-spacing: -.2px;
  color: #2e2e2e;
}
.r-first { height: 19.500px; }
.r-head { height: 22.800px; }
.rh {
  width: 28px;
  flex: none;
  background: #fafafa;
  border-right: 1px solid #e0e0e0;
  text-align: center;
  color: #555;
  font-family: "Open Sans", sans-serif;
  font-size: 12px;
  letter-spacing: 0;
  line-height: 22px;
  padding-left: 2px;
}
.r-head .rh { line-height: 23px; }
.c {
  flex: none;
  border-right: 1px solid #e6e6e6;
  padding-left: 2px;
  line-height: 22px;
  white-space: nowrap;
}
.hd { text-align: center; padding: 0; position: relative; line-height: 21px; font-size: 13.500px; letter-spacing: .15px; color: #222; }
.hd::after { content: ""; position: absolute; bottom: 2px; height: 1px; background: #444; }
.cb.hd::after { left: 6px; width: 155px; }
.cc.hd::after { left: 7px; width: 120px; }
.rest {
  flex: 1;
  background: repeating-linear-gradient(90deg, transparent 0, transparent 61.800px, #e6e6e6 61.800px, #e6e6e6 62.800px);
}
.cursor { position: absolute; left: 667px; top: 307px; }

.vscroll {
  width: 15px;
  display: flex;
  flex-direction: column;
  align-items: center;
  padding: 3px 0 3px 1px;
}
.vthumb { width: 6px; height: 347px; margin-top: 4px; background: #6f6f6f; border-radius: 3px; }
.vdown { margin-top: auto; }

/* sheet tabs */
.sheetbar {
  height: 21px;
  flex: none;
  display: flex;
  align-items: center;
  font-size: 9px;
  color: #555;
}
.nav { width: 81px; display: flex; padding-left: 19px; gap: 17px; }
.stab {
  width: 48px;
  height: 21px;
  line-height: 21px;
  text-align: center;
  position: relative;
  border-right: 1px solid #dcdcdc;
}
.stab.on {
  width: 40px;
  background: #fff;
  border-right: 0;
  color: #333;
  font-weight: 700;
  margin-right: 3px;
  line-height: 19px;
}
.stab.on::after { content: ""; position: absolute; left: 5px; right: 5px; bottom: 5px; height: 1.500px; background: #3f7d63; }
.s2 { width: 47px; border-left: 1px solid #dcdcdc; }
.addsheet { margin-left: 28px; width: 10px; font-size: 15px; line-height: 10px; font-weight: 300; text-align: center; color: #555; }
.hdots { margin-left: 495px; width: 10px; text-align: center; color: #444; font-size: 10px; font-weight: 700; }
.harr { margin-left: 8px; }
.hthumb { width: 478px; height: 6px; margin-left: 6px; background: #6f6f6f; border-radius: 3px; }
.harr.r { margin-left: 12px; }

/* status bar */
.status {
  height: 17px;
  flex: none;
  display: flex;
  align-items: center;
  padding-left: 8px;
  background: #f3f3f3;
  font-size: 7.800px;
  color: #555;
}
.st-num { margin-left: 14px; letter-spacing: -.1px; }
.st-disp { margin-left: auto; display: flex; align-items: center; gap: 1px; }
.view { width: 27px; height: 17px; display: flex; align-items: center; justify-content: center; margin-left: 1px; }
.st-disp + .view { margin-left: 14px; }
.view.on { background: #dddddd; }
.zm { font-size: 10px; width: 7px; text-align: center; }
.z-minus { margin-left: 3.500px; }
.slider { width: 69px; height: 1px; background: #888; margin-left: 3.500px; position: relative; }
.slider i { position: absolute; left: 37px; top: -4px; width: 3px; height: 9px; background: #555; display: block; }
.z-plus { margin-left: 3.500px; }
.pct { margin-left: 7px; margin-right: 5.500px; }
```
